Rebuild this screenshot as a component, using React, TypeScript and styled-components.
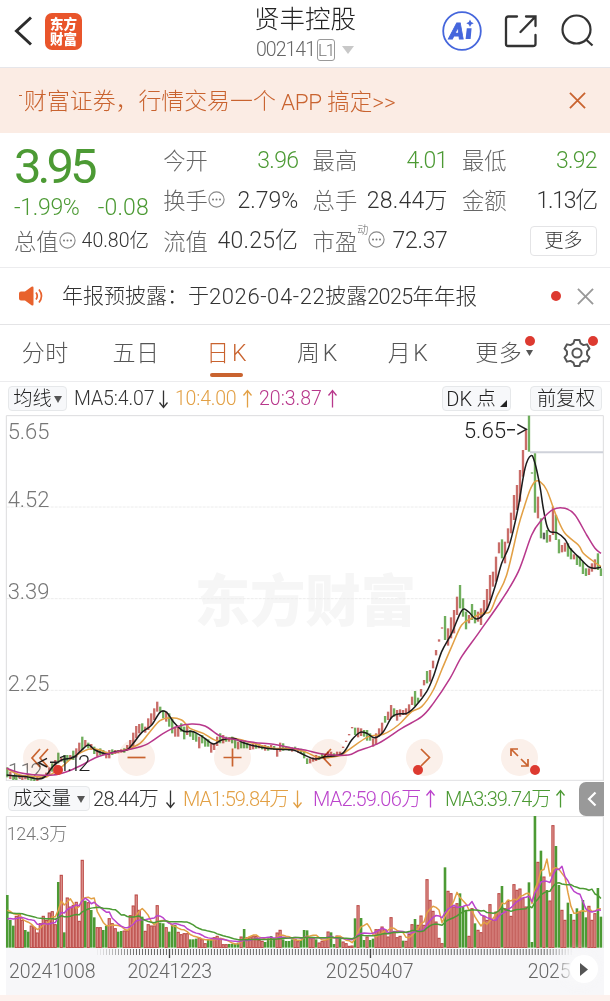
import React from "react";
import styled, { createGlobalStyle } from "styled-components";

const Global = createGlobalStyle`
  * { box-sizing: border-box; }
  body { margin: 0; background: #fff; }
  body, button { font-family: Roboto, "Noto Sans CJK SC", sans-serif; font-weight: 300; }
  svg { display: block; flex: none; }
`;

const RED = "#bb4844";
const GREEN = "#4c9a34";
const ORANGE = "#e2a045";
const MAGENTA = "#b8388c";
const PURPLE = "#bb44cc";
const BRAND = "#c9632f";

const Screen = styled.main`
  width: 610px;
  height: 1001px;
  display: flex;
  flex-direction: column;
  overflow: hidden;
  background: #fff;
  color: #333;
`;

const Txt = styled.span<{ $size: number; $color?: string; $ls?: number; $weight?: number }>`
  font-size: ${(p) => p.$size}px;
  line-height: 1;
  white-space: pre;
  color: ${(p) => p.$color ?? "#333"};
  letter-spacing: ${(p) => p.$ls ?? 0}px;
  font-weight: ${(p) => p.$weight ?? 300};
`;

/* header */
const Header = styled.header`
  height: 68px;
  flex: none;
  display: grid;
  grid-template-columns: 205px 1fr 205px;
  border-bottom: 1px solid #e6e6ea;
`;
const HeaderLeft = styled.div`
  display: flex;
  align-items: center;
  gap: 13px;
  padding: 0 0 5px 14px;
`;
const HeaderRight = styled.div`
  display: flex;
  align-items: center;
  gap: 22px;
  padding: 0 0 5px 37px;
`;
const Logo = styled.div`
  width: 37px;
  height: 37px;
  border-radius: 7px;
  background: #e9552b;
  color: #fff;
  font-size: 13.5px;
  line-height: 14.5px;
  font-weight: 900;
  text-align: center;
  padding-top: 4.5px;
`;
const Title = styled.div`
  display: flex;
  flex-direction: column;
  align-items: center;
  padding-top: 7px;
  gap: 6px;
`;
const Code = styled.div`
  display: flex;
  align-items: center;
  gap: 2px;
`;
const Level = styled.span`
  width: 18px;
  height: 22px;
  border: 1px solid #999;
  border-radius: 3px;
  font-size: 17px;
  line-height: 20px;
  letter-spacing: -1.2px;
  text-align: center;
  color: #777;
`;
const CodeCaret = styled.span`
  margin-left: 5px;
`;

/* promo */
const Promo = styled.div`
  height: 65px;
  flex: none;
  display: flex;
  align-items: center;
  justify-content: space-between;
  padding: 0 24px 0 18px;
  background: #fbece4;
`;
const PromoText = styled.div`
  display: flex;
  align-items: center;
  padding-top: 3px;
`;

/* quote */
const Quote = styled.section`
  height: 135px;
  flex: none;
  display: grid;
  grid-template-columns: repeat(4, 135px);
  column-gap: 14.3px;
  padding: 7px 0 0 14px;
  border-bottom: 1px solid #ececee;
`;
const QuoteCol = styled.div`
  display: flex;
  flex-direction: column;
`;
const Cell = styled.div<{ $h?: number }>`
  height: ${(p) => p.$h ?? 40.4}px;
  display: flex;
  align-items: center;
  justify-content: space-between;
`;
const Label = styled.span`
  display: flex;
  align-items: center;
  padding-top: 2px;
  font-size: 22.3px;
  line-height: 1;
  color: #666;
  > svg { margin-bottom: 4px; }
`;
const Sup = styled.sup`
  font-size: 11px;
  line-height: 1;
  align-self: flex-start;
  margin-top: -6px;
`;
const MoreButton = styled.button`
  width: 67px;
  height: 30px;
  margin-left: auto;
  padding: 0;
  border: 1px solid #e4e4e6;
  border-radius: 4px;
  background: #fff;
  color: #333;
  font-size: 19px;
  line-height: 27px;
`;

/* notice */
const Notice = styled.section`
  height: 57px;
  flex: none;
  display: flex;
  align-items: center;
  padding: 0 16px 0 19px;
  border-bottom: 1px solid #e4e4e6;
`;
const NoticeText = styled.div`
  display: flex;
  align-items: center;
  margin-left: 18px;
  padding-top: 1px;
  flex: 1;
`;
const NoticeActions = styled.div`
  display: flex;
  align-items: center;
  gap: 16px;
`;
const Dot = styled.i`
  display: block;
  width: 10px;
  height: 10px;
  border-radius: 50%;
  background: #dd3a30;
`;

/* tabs */
const Tabs = styled.nav`
  height: 57px;
  flex: none;
  display: grid;
  grid-template-columns: repeat(6, 90.7px) 1fr;
  border-bottom: 1px solid #ececee;
`;
const Tab = styled.div<{ $active?: boolean }>`
  position: relative;
  display: flex;
  align-items: center;
  justify-content: center;
  gap: 2px;
  font-size: 23px;
  line-height: 1;
  letter-spacing: 0.6px;
  color: ${(p) => (p.$active ? BRAND : "#555")};
  &::after {
    content: "";
    display: ${(p) => (p.$active ? "block" : "none")};
    position: absolute;
    left: 29px;
    bottom: 4px;
    width: 33px;
    height: 4px;
    border-radius: 2px;
    background: ${BRAND};
  }
`;
const TabBadge = styled.span<{ $x: number; $y: number }>`
  position: absolute;
  left: ${(p) => p.$x}px;
  top: ${(p) => p.$y}px;
`;
const GearTab = styled.div`
  position: relative;
  display: flex;
  align-items: center;
  padding-left: 18px;
`;

/* legends */
const Legend = styled.div<{ $h: number }>`
  height: ${(p) => p.$h}px;
  flex: none;
  display: flex;
  align-items: center;
  padding-left: 8px;
`;
const Chip = styled.button<{ $w: number; $gap?: number }>`
  width: ${(p) => p.$w}px;
  height: 25px;
  padding: 1px 0 0;
  display: flex;
  align-items: center;
  justify-content: center;
  gap: ${(p) => p.$gap ?? 0}px;
  border: 1px solid #e6e8ea;
  border-radius: 4px;
  background: #f7f8fa;
  color: #222;
  font-size: 19.3px;
  line-height: 1;
`;
const Corner = styled.svg`
  margin-top: 9px;
`;
const Stat = styled.div<{ $w: number; $ml: number; $color: string }>`
  width: ${(p) => p.$w}px;
  margin-left: ${(p) => p.$ml}px;
  padding-top: 1px;
  display: flex;
  align-items: center;
  justify-content: space-between;
  color: ${(p) => p.$color};
`;
const Spacer = styled.div`
  flex: 1;
`;
const ChipGroup = styled.div`
  display: flex;
  gap: 19px;
  padding-right: 8px;
`;

/* charts */
const ChartBox = styled.div`
  position: relative;
  height: 366px;
  flex: none;
`;
const Controls = styled.div`
  position: absolute;
  left: 22.5px;
  bottom: 5.5px;
  display: flex;
  gap: 58.8px;
  mix-blend-mode: multiply;
`;
const RoundButton = styled.div`
  width: 37px;
  height: 37px;
  border-radius: 50%;
  background: #fbf0ea;
  display: grid;
  place-items: center;
`;
const ChartDot = styled.div<{ $x: number }>`
  position: absolute;
  left: ${(p) => p.$x}px;
  top: 350px;
`;
const Drawer = styled.div`
  width: 25px;
  height: 34px;
  margin-right: 6px;
  border-radius: 7px 0 0 7px;
  background: #999;
  display: grid;
  place-items: center;
`;
const VolumeBox = styled.div`
  height: 132px;
  flex: none;
`;
const Axis = styled.div`
  position: relative;
  height: 47px;
  flex: none;
  margin: 0 6px;
  background: #f7f7f9;
`;
const Dates = styled.div`
  display: flex;
  padding: 4px 0 0 3px;
`;
const DateText = styled(Txt)<{ $ml?: number }>`
  margin-left: ${(p) => p.$ml ?? 0}px;
`;
const Play = styled.div`
  position: absolute;
  right: 6px;
  top: 7px;
  width: 28px;
  height: 28px;
  border-radius: 50%;
  background: #fff;
  display: grid;
  place-items: center;
  box-shadow: -5px 0 9px 4px rgba(247, 247, 249, 0.8);
`;
const Footer = styled.div`
  flex: 1;
  background: #fdf1ed;
`;

type Pt = [number, number];

const smooth = (pts: Pt[]) => {
  let d = `M${pts[0][0]} ${pts[0][1]}`;
  for (let i = 0; i < pts.length - 1; i++) {
    const a = pts[Math.max(0, i - 1)];
    const b = pts[i];
    const c = pts[i + 1];
    const e = pts[Math.min(pts.length - 1, i + 2)];
    d += `C${b[0] + (c[0] - a[0]) / 6} ${b[1] + (c[1] - a[1]) / 6} ${c[0] - (e[0] - b[0]) / 6} ${c[1] - (e[1] - b[1]) / 6} ${c[0]} ${c[1]}`;
  }
  return d;
};

const pairs = (s: string, dx: number, dy: number): Pt[] =>
  s.trim().split(/\s+/).map((p) => {
    const [x, y] = p.split(",").map(Number);
    return [x + dx, y + dy] as Pt;
  });

/* Chart units are thirds of a pixel. */
const X0 = 22;
const STEP = 8.994;

const ma5 = [
  ...pairs("20,285 50,288 80,290 115,297 135,290 160,258 185,240 220,233 240,215 265,195 285,210 320,222 345,215 380,210 400,190 425,158 455,135 480,97 500,97 520,125 550,153 580,155 610,172 640,192 665,180 700,175 730,188 760,197 800,205 840,208 880,210", 0, 2040),
  ...pairs("0,766 30,777 60,770 110,762 140,720 165,697 185,700 210,713 235,695 260,652 280,642 305,640 330,620 365,575 385,530 410,455 440,400 470,332 490,335 515,357 545,330 570,260 590,190 610,145 625,90 640,20 660,-95 678,-133 690,-110 705,-40 714,20 725,75 735,95 755,98 780,118 795,145 820,170 850,200 870,205 888,202", 915, 1500),
];
const ma10 = [
  ...pairs("20,265 60,285 115,290 140,290 180,265 215,235 265,208 300,210 330,220 380,208 420,190 450,155 480,122 510,113 545,120 570,145 610,160 650,182 700,175 760,190 820,205 870,205", 0, 2040),
  ...pairs("0,755 40,772 100,768 130,750 190,710 235,703 280,675 320,635 350,620 385,570 410,510 440,440 470,375 500,355 530,340 555,335 575,290 605,225 640,80 658,20 675,-30 690,-55 705,-55 725,-30 742,15 755,50 780,100 820,135 835,160 860,180 888,200", 915, 1500),
];
const ma20 = [
  ...pairs("20,265 60,278 115,285 160,285 200,275 240,258 290,232 340,218 390,208 440,193 490,160 530,140 575,132 615,138 660,168 700,178 760,187 820,193 870,203", 0, 2040),
  ...pairs("0,750 60,763 130,765 160,752 220,730 290,685 350,650 385,610 435,535 470,470 520,400 590,300 640,215 680,105 710,60 745,28 780,25 810,45 845,105 870,145 888,160", 915, 1500),
];

const earlyCandles =
  "g262-292 r275-297 g285-300 g283-300 r285-295 r288-300 r285-298 g285-300 g287-302 g292-304 r290-303 r290-298 g285-296 r278-292 r262-285 g250-275 r240-260 g218-250 r232-245 g225-248 g225-245 r225-240 g212-240 r205-232 r188-215 g170-210 r180-200 g188-205 r192-210 g200-222 r210-230 g205-225 g210-225 r215-235 r210-235 g208-225 r210-222 r210-220 r208-218 g205-218 r195-212 r180-208 r158-200 r138-175 r132-160 g130-155 r140-158 r115-150 r100-135 r85-120 r65-95 g80-95 g90-115 r95-125 g100-140 g115-160 r140-170 r140-170 g130-155 g140-178 r135-165 g150-170 g155-180 g160-185 r170-205 g165-190 g175-200 g178-200 r190-218 r190-210 r170-198 g160-190 r165-190 g170-185 r172-185 g170-190 g178-205 r185-208 g180-205 g180-205 g188-205 r195-210 r192-208 g190-206 r192-205 g195-208 r195-212 g198-212 r195-208 g198-210 r205-230 r188-215 g190-212 g198-210 g200-212 r202-215 g200-212 r204-218 g206-220 g212-235";
const lateCandles =
  "g775-792 r775-790 r772-785 r765-783 g768-780 g760-775 r765-778 r755-775 r755-770 g760-770 r755-768 r755-765 r740-744 r722-726 r702-706 r681-685 g683-705 r683-712 r685-708 g690-710 g690-722 g700-722 r715-740 r700-735 r685-710 r668-705 g648-668 r635-660 r615-655 g625-650 r630-662 r628-650 r630-645 r625-645 r613-640 r590-615 g573-618 g593-608 r567-590 r540-556 g513-550 r510-545 r482-505 r450-466 r418-425 r382-386 g348-420 r385-437 r352-415 r330-400 r290-345 g255-325 g295-350 g335-388 r345-370 g312-360 g330-370 r335-365 r325-375 r300-345 r267-330 r225-300 r215-260 r170-245 r127-160 g118-175 r125-190 r85-130 r38-100 r-15-60 r-45-30 r-90-5 r-150--70 r-212--150 g-253--145 g-83--79 g-140-38 r-10-55 g55-115 k98-118 g90-128 r105-125 r20-105 g45-120 g118-160 r135-157 r128-155 g130-170 g145-178 r163-178 g165-195 g170-200 g185-222 g205-228 r205-225 r190-215 r178-208 g160-210 g205-228";

const parseCandles = (s: string, dy: number) =>
  s.split(" ").map((t) => {
    const m = t.match(/^(\w)(-?\d+)-(-?\d+)$/)!;
    return { c: m[1], top: Number(m[2]) + dy, bottom: Number(m[3]) + dy };
  });
const candles = [...parseCandles(earlyCandles, 2040), ...parseCandles(lateCandles, 1500)];

const volumes =
  "g255 g330 g347 r318 r310 r330 g360 g365 r347 r352 r368 r340 r318 r330 r308 r304 r343 g216 r195 g367 r263 r290 r285 r276 r333 r150 g272 r277 g300 g322 r352 r352 g360 g348 r325 r340 r355 g365 g363 r362 r362 r316 r287 r254 r300 g320 r363 r343 r347 r347 r286 g338 g340 r352 g365 g343 g345 r366 r373 r370 r370 g388 g388 g386 r383 r388 r400 g390 g388 r382 r378 r385 r403 r403 g402 g402 g401 g398 r380 g357 r382 r380 r377 r378 r390 r393 g396 g385 g378 g384 r368 r360 g388 g393 g393 g388 r387 r394 g390 g360 g361 r385 r383 g388 r398 r393 r390 r365 g367 g402 r377 g380 r395 r400 r408 r407 g325 r286 g324 g390 r380 g390 g386 r358 r358 r350 r358 r380 r322 r365 r382 r378 g392 r393 r372 r343 g327 r345 r317 r345 r208 r270 r303 r335 r384 r400 g172 r243 r250 r290 r280 g250 g290 g300 r378 r295 g340 r360 r367 r318 r330 r283 r330 r305 r250 g228 r295 r273 r318 r223 r240 r236 r265 r290 g217 g396 g18 r156 g122 r200 g240 r272 r46 g108 g225 r300 r330 g278 g312 r330 g295 r305 g270 g322 r288 r330 r310 g234 g320"
    .split(" ")
    .map((t) => ({ c: t[0], y: Number(t.slice(1)) }));

const average = (n: number, before: number) =>
  "M" +
  volumes
    .map((_, i) => {
      let sum = 0;
      for (let k = i - n + 1; k <= i; k++) sum += k < 0 ? before : volumes[k].y;
      return `${(X0 + STEP * i).toFixed(1)} ${(sum / n).toFixed(1)}`;
    })
    .join("L");

const fill = (c: string) => (c === "r" ? RED : c === "g" ? GREEN : "#333");

const Arrow = ({ up }: { up?: boolean }) => (
  <svg width="11" height="20" viewBox="0 0 11 20" fill="none" stroke="currentColor" strokeWidth="1.3">
    <path d={up ? "M5.5 18.5V1.5M1.5 6.5l4-5 4 5" : "M5.5 1.5v17M1.5 13.5l4 5 4-5"} />
  </svg>
);
const Info = () => (
  <svg width="17" height="17" viewBox="0 0 17 17">
    <circle cx="8.5" cy="8.5" r="7.6" fill="none" stroke="#888" strokeWidth="1.1" />
    <g fill="#777">
      <circle cx="5" cy="8.5" r="1" />
      <circle cx="8.5" cy="8.5" r="1" />
      <circle cx="12" cy="8.5" r="1" />
    </g>
  </svg>
);
const Cross = ({ size, color, w }: { size: number; color: string; w: number }) => (
  <svg width={size} height={size} viewBox="0 0 18 18" stroke={color} strokeWidth={w}>
    <path d="M1 1l16 16M17 1L1 17" />
  </svg>
);
const Caret = ({ w, h, color }: { w: number; h: number; color: string }) => (
  <svg width={w} height={h} viewBox="0 0 10 8" preserveAspectRatio="none">
    <path d="M0 0h10L5 8z" fill={color} />
  </svg>
);

const gearPath = (() => {
  const pts: string[] = [];
  for (let i = 0; i < 6; i++) {
    const base = (i * 60 - 90) * (Math.PI / 180);
    for (const [r, a] of [[10.2, -0.36], [13.2, -0.19], [13.2, 0.19], [10.2, 0.36]]) {
      pts.push(`${(15 + r * Math.cos(base + a)).toFixed(2)} ${(15 + r * Math.sin(base + a)).toFixed(2)}`);
    }
  }
  return `M${pts.join("L")}Z`;
})();

const priceLabels: [string, number][] = [["5.65", 438.5], ["4.52", 506.5], ["3.39", 598.5], ["2.25", 690.5], ["1.12", 779]];

const PriceChart = () => (
  <svg width="610" height="366" viewBox="0 1245 1830 1098" fill="none">
    <text x="584" y="1862" fontSize="166" fontWeight="900" fill="#f6f6f6">东方财富</text>
    {[1521, 1796, 2071].map((y) => (
      <path key={y} d={`M20 ${y}H1808`} stroke="#ececec" strokeWidth="3" strokeDasharray="9 3" />
    ))}
    <path d="M19 2343V1247H1810V2343" stroke="#dcdcde" strokeWidth="3" />
    <path d="M19 2341H1810" stroke="#e0e0e2" strokeWidth="3" />
    {priceLabels.map(([t, y]) => (
      <text key={t} x="23" y={y * 3} fontSize="66" fill="#777" letterSpacing={t === "1.12" ? -7 : 0}>{t}</text>
    ))}
    <path d="M1590 1357H1809" stroke="#cfd2da" strokeWidth="6" />
    {candles.map((k, i) => (
      <rect key={i} x={X0 + STEP * i - 3.5} y={k.top} width="7" height={k.bottom - k.top} fill={fill(k.c)} opacity="0.8" />
    ))}
    <g strokeWidth="4.6" strokeLinejoin="round">
      <path d={smooth(ma10)} stroke={ORANGE} />
      <path d={smooth(ma5)} stroke="#1c1c1c" />
      <path d={smooth(ma20)} stroke={MAGENTA} />
    </g>
    <text x="1391" y="1313" fontSize="67" fill="#222">5.65</text>
    <path d="M1521 1289h24M1552 1273l27 15-27 15" stroke="#222" strokeWidth="4.5" />
    <text x="174" y="2313" fontSize="67" fill="#222" letterSpacing="-10">1.12</text>
    <path d="M150 2287h22M141 2275l-25 13 25 13" stroke="#222" strokeWidth="4.5" />
  </svg>
);

const icons = [
  "M17 10l-8 9 8 9M25 10l-8 9 8 9",
  "M9.5 18.5h18",
  "M9.5 18.5h18M18.5 9.5v18",
  "M21 10l-8 8.5 8 8.5",
  "M15 10l8.5 8.5L15 27",
  "M17 17l-7-7M10 17v-7h7M20 20l7 7M27 20v7h-7",
];

export default function App() {
  return (
    <Screen>
      <Global />
      <Header>
        <HeaderLeft>
          <svg width="18" height="30" viewBox="0 0 18 30" fill="none" stroke="#2c2c2c" strokeWidth="3">
            <path d="M17 1.5L2.5 15 17 28.5" />
          </svg>
          <Logo>东方<br />财富</Logo>
        </HeaderLeft>
        <Title>
          <Txt $size={25.5} $color="#222">贤丰控股</Txt>
          <Code>
            <Txt $size={19.5} $color="#666" $ls={-1}>002141</Txt>
            <Level>L1</Level>
            <CodeCaret><Caret w={12} h={8} color="#c8c8c8" /></CodeCaret>
          </Code>
        </Title>
        <HeaderRight>
          <svg width="40" height="40" viewBox="0 0 40 40">
            <circle cx="20" cy="20" r="18.8" fill="none" stroke="#4566dc" strokeWidth="1.8" />
            <text x="7.5" y="28" fontSize="22.5" fontWeight="900" fontStyle="italic" fill="#4566dc" stroke="#4566dc" strokeWidth="0.8">A</text>
            <path d="M24.8 17.2h4.8l-1 10.8h-5z" fill="#4566dc" />
            <path d="M28 8.500l1.200 2.500 2.500 1.200-2.500 1.200-1.200 2.500-1.200-2.500-2.500-1.200 2.500-1.200z" fill="#4566dc" />
          </svg>
          <svg width="34" height="34" viewBox="0 0 34 34" fill="none" stroke="#333" strokeWidth="2.3" strokeLinecap="round">
            <path d="M13 2.500H4.500Q2 2.500 2 5v25q0 2 2 2h25q2.500 0 2.500-2v-9M22 2.500h9.500v9.500M31.500 2.500L16.500 18" />
          </svg>
          <svg width="36" height="36" viewBox="0 0 36 36" fill="none" stroke="#333" strokeWidth="2.2">
            <circle cx="16.500" cy="16.500" r="14" />
            <path d="M26 26.500l6.500 6" />
          </svg>
        </HeaderRight>
      </Header>

      <Promo>
        <PromoText>
          <svg width="6" height="24" viewBox="0 0 6 24"><path d="M1 5.5h3" stroke={BRAND} /></svg>
          <Txt $size={22.9} $color={BRAND}>财富证券，行情交易一个</Txt>
          <Txt $size={22.5} $color={BRAND} $ls={-0.3}> APP</Txt>
          <Txt $size={22.5} $color={BRAND}> 搞定&gt;&gt;</Txt>
        </PromoText>
        <Cross size={17} color={BRAND} w={1.9} />
      </Promo>

      <Quote>
        <QuoteCol>
          <Cell $h={53}><Txt $size={49} $color={GREEN} $weight={400} $ls={-4}>3.95</Txt></Cell>
          <Cell $h={28}>
            <Txt $size={23} $color={GREEN} $ls={-0.3}>-1.99%</Txt>
            <Txt $size={23} $color={GREEN} $ls={0.2}>-0.08</Txt>
          </Cell>
          <Cell>
            <Label>总值<Info /></Label>
            <Txt $size={19.5}>40.80亿</Txt>
          </Cell>
        </QuoteCol>
        <QuoteCol>
          <Cell><Label>今开</Label><Txt $size={23} $color={GREEN} $ls={-0.7}>3.96</Txt></Cell>
          <Cell><Label>换手<Info /></Label><Txt $size={23}>2.79%</Txt></Cell>
          <Cell><Label>流值</Label><Txt $size={23} $ls={0.2}>40.25亿</Txt></Cell>
        </QuoteCol>
        <QuoteCol>
          <Cell><Label>最高</Label><Txt $size={23} $color={GREEN} $ls={-0.7}>4.01</Txt></Cell>
          <Cell><Label>总手</Label><Txt $size={23} $ls={0.2}>28.44万</Txt></Cell>
          <Cell><Label>市盈<Sup>动</Sup><Info /></Label><Txt $size={23} $ls={-0.3}>72.37</Txt></Cell>
        </QuoteCol>
        <QuoteCol>
          <Cell><Label>最低</Label><Txt $size={23} $color={GREEN} $ls={-0.7}>3.92</Txt></Cell>
          <Cell><Label>金额</Label><Txt $size={23} $ls={-1.3}>1.13亿</Txt></Cell>
          <Cell><MoreButton>更多</MoreButton></Cell>
        </QuoteCol>
      </Quote>

      <Notice>
        <svg width="25" height="22" viewBox="0 0 25 22">
          <path d="M0 8.500q0-2 2-2h4l6.500-4.700q2-1 2 1v16.400q0 2-2 1L6 15.500H2q-2 0-2-2z" fill="#e8622d" />
          <path d="M17 7.500q2.500 3.500 0 7M20 4.500q5 6.500 0 13" stroke="#e8622d" strokeWidth="1.7" fill="none" />
        </svg>
        <NoticeText>
          <Txt $size={21}>年报预披露：于</Txt>
          <Txt $size={22} $ls={0.6}>2026-04-22</Txt>
          <Txt $size={21}>披露</Txt>
          <Txt $size={21.5} $ls={-0.6}>2025</Txt>
          <Txt $size={21.5}>年年报</Txt>
        </NoticeText>
        <NoticeActions>
          <Dot />
          <Cross size={17} color="#999" w={2} />
        </NoticeActions>
      </Notice>

      <Tabs>
        <Tab>分时</Tab>
        <Tab>五日</Tab>
        <Tab $active><span>日</span><span>K</span></Tab>
        <Tab><span>周</span><span>K</span></Tab>
        <Tab><span>月</span><span>K</span></Tab>
        <Tab>
          更多
          <TabBadge $x={72} $y={11}><Dot /></TabBadge>
          <TabBadge $x={73} $y={25}><Caret w={7} h={6} color="#555" /></TabBadge>
        </Tab>
        <GearTab>
          <svg width="30" height="30" viewBox="0 0 30 30" fill="none" stroke="#555" strokeWidth="2" strokeLinejoin="round">
            <path d={gearPath} />
            <circle cx="15" cy="15" r="4.6" />
          </svg>
          <TabBadge $x={44} $y={11}><Dot /></TabBadge>
        </GearTab>
      </Tabs>

      <Legend $h={33}>
        <Chip $w={59} $gap={2}>均线<Caret w={8} h={7} color="#555" /></Chip>
        <Stat $w={95} $ml={7} $color="#333"><Txt $size={19.5} $color="inherit" $ls={-0.1}>MA5:4.07</Txt><Arrow /></Stat>
        <Stat $w={78} $ml={6} $color={ORANGE}><Txt $size={19.5} $color="inherit" $ls={-0.2}>10:4.00</Txt><Arrow up /></Stat>
        <Stat $w={79} $ml={6} $color={MAGENTA}><Txt $size={19.5} $color="inherit">20:3.87</Txt><Arrow up /></Stat>
        <Spacer />
        <ChipGroup>
          <Chip $w={69} $gap={4}>
            <Txt $size={20} $color="#222" $ls={0.2}>DK</Txt>
            点
            <Corner width="7" height="7" viewBox="0 0 7 7"><path d="M7 0v7H0z" fill="#222" /></Corner>
          </Chip>
          <Chip $w={72}>前复权</Chip>
        </ChipGroup>
      </Legend>

      <ChartBox>
        <PriceChart />
        <Controls>
          {icons.map((d) => (
            <RoundButton key={d}>
              <svg width="37" height="37" viewBox="0 0 37 37" fill="none" stroke={BRAND} strokeWidth="1.7"><path d={d} /></svg>
            </RoundButton>
          ))}
        </Controls>
        <ChartDot $x={53}><Dot /></ChartDot>
        <ChartDot $x={413}><Dot /></ChartDot>
        <ChartDot $x={530}><Dot /></ChartDot>
      </ChartBox>

      <Legend $h={35}>
        <Chip $w={82} $gap={6}>成交量<Caret w={8} h={7} color="#555" /></Chip>
        <Stat $w={83} $ml={3} $color="#333"><Txt $size={20} $color="inherit" $ls={-0.7}>28.44万</Txt><Arrow /></Stat>
        <Stat $w={120} $ml={7} $color={ORANGE}><Txt $size={20} $color="inherit" $ls={-0.9}>MA1:59.84万</Txt><Arrow /></Stat>
        <Stat $w={123} $ml={10} $color={PURPLE}><Txt $size={20} $color="inherit" $ls={-0.7}>MA2:59.06万</Txt><Arrow up /></Stat>
        <Stat $w={121} $ml={9} $color={GREEN}><Txt $size={20} $color="inherit" $ls={-0.9}>MA3:39.74万</Txt><Arrow up /></Stat>
        <Spacer />
        <Drawer>
          <svg width="10" height="16" viewBox="0 0 10 16" fill="none" stroke="#fff" strokeWidth="2.2"><path d="M8.500 1.500L2 8l6.500 6.500" /></svg>
        </Drawer>
      </Legend>

      <VolumeBox>
        <svg width="610" height="132" viewBox="0 18 1830 396" fill="none">
          <path d="M19 414V19H1810V414" stroke="#dcdcde" strokeWidth="3" />
          <text x="20" y="91" fontSize="54" fill="#777" letterSpacing="-1">124.3万</text>
          {volumes.map((v, i) => {
            const x = X0 + STEP * i;
            return v.c === "g" ? (
              <rect key={i} x={x - 4} y={v.y} width="7.8" height={413 - v.y} fill={GREEN} />
            ) : (
              <rect key={i} x={x - 3.3} y={v.y + 1} width="6.4" height={412 - v.y} fill="#e3a09c" stroke={RED} strokeWidth="3.2" />
            );
          })}
          <g strokeWidth="4.500" strokeLinejoin="round">
            <path d={average(5, 312)} stroke={ORANGE} />
            <path d={average(10, 334)} stroke={PURPLE} />
            <path d={average(20, 310)} stroke={GREEN} />
          </g>
        </svg>
      </VolumeBox>

      <Axis>
        <svg width="598" height="10" viewBox="6 0 598 10">
          {Array.from({ length: 159 }, (_, i) => (
            <path key={i} d={`M${97.5 + i * 2.998} 1v6`} stroke="#666" strokeWidth="1" opacity={Math.min(1, (i + 1) / 14, (159 - i) / 10)} />
          ))}
          <path d="M169.500 1v9M370.500 1v9" stroke="#444" strokeWidth="1.3" />
        </svg>
        <Dates>
          <DateText $size={19.5} $color="#666">20241008</DateText>
          <DateText $size={19.5} $color="#666" $ls={-0.3} $ml={32}>20241223</DateText>
          <DateText $size={19.5} $color="#666" $ls={0.2} $ml={114}>20250407</DateText>
          <DateText $size={19.5} $color="#666" $ls={-0.2} $ml={114}>2025</DateText>
        </Dates>
        <Play>
          <svg width="8" height="13" viewBox="0 0 8 13"><path d="M0 0l8 6.500L0 13z" fill="#555" /></svg>
        </Play>
      </Axis>
      <Footer />
    </Screen>
  );
}
